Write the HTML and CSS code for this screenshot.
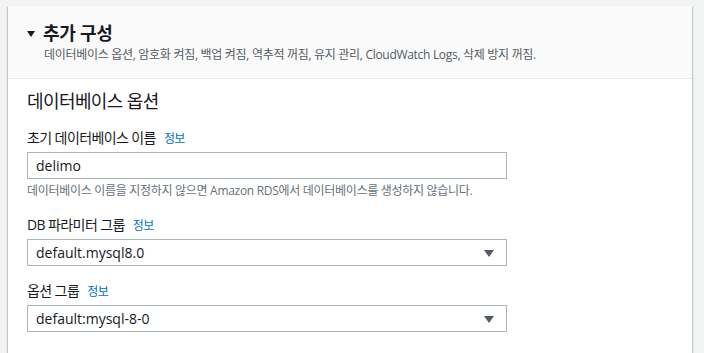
FILE: index.html
```html
<!DOCTYPE html>
<html lang="ko">
<head>
<meta charset="UTF-8">
<title>추가 구성</title>
<link rel="stylesheet" href="styles.css">
</head>
<body>
<div class="panel">
  <div class="panel-header">
    <div class="panel-title">
      <span class="caret"></span>
      <h2>추가 구성</h2>
    </div>
    <div class="panel-desc">데이터베이스 옵션, 암호화 켜짐, 백업 켜짐, 역추적 꺼짐, 유지 관리, CloudWatch Logs, 삭제 방지 꺼짐.</div>
  </div>
  <div class="panel-body">
    <h3 class="section-title">데이터베이스 옵션</h3>

    <div class="field">
      <div class="field-label">초기 데이터베이스 이름 <a class="info" href="#">정보</a></div>
      <div class="input">delimo</div>
      <div class="hint">데이터베이스 이름을 지정하지 않으면 Amazon RDS에서 데이터베이스를 생성하지 않습니다.</div>
    </div>

    <div class="field">
      <div class="field-label">DB 파라미터 그룹 <a class="info" href="#">정보</a></div>
      <div class="input select">default.mysql8.0<span class="arrow"></span></div>
    </div>

    <div class="field">
      <div class="field-label">옵션 그룹 <a class="info" href="#">정보</a></div>
      <div class="input select">default:mysql-8-0<span class="arrow"></span></div>
    </div>
  </div>
</div>
</body>
</html>
```

FILE: styles.css
```css
body {
  margin: 0;
  padding: 6px 12px 0 8px;
  background-color: #f2f3f3;
  font-family: 'Open Sans', 'Noto Sans CJK KR', sans-serif;
  color: #16191f;
  letter-spacing: -0.6px;
}

.panel {
  background-color: #ffffff;
  box-shadow: 0 1px 1px 0 rgba(0, 28, 36, 0.3), 1px 1px 1px 0 rgba(0, 28, 36, 0.15), -1px 1px 1px 0 rgba(0, 28, 36, 0.15);
  min-height: 360px;
}

.panel-header {
  background-color: #fafafa;
  border-bottom: 1px solid #eaeded;
  padding: 16px 20px 14px 19px;
}

.panel-title {
  display: flex;
  align-items: center;
  gap: 8px;
}

.caret {
  width: 0;
  height: 0;
  border-left: 4px solid transparent;
  border-right: 4px solid transparent;
  border-top: 6px solid #16191f;
  margin-top: 2px;
}

.panel-title h2 {
  margin: 0;
  font-size: 18px;
  font-weight: 700;
  line-height: 22px;
  letter-spacing: -0.3px;
}

.panel-desc {
  font-size: 12px;
  color: #545b64;
  line-height: 18px;
  margin-top: 2px;
  padding-left: 17px;
  letter-spacing: -0.3px;
}

.panel-body {
  padding: 10px 20px 0 19px;
}

.section-title {
  margin: 0 0 9px;
  font-size: 18px;
  font-weight: 400;
  line-height: 24px;
}

.field {
  margin-top: 15px;
}

.field-label {
  font-size: 14px;
  line-height: 20px;
  margin-bottom: 3px;
}

.info {
  font-size: 12px;
  color: #0073bb;
  text-decoration: none;
  margin-left: 5px;
}

.input {
  width: 480px;
  box-sizing: border-box;
  height: 27px;
  border: 1px solid #aab7b8;
  padding: 0 8px;
  font-size: 14px;
  line-height: 25px;
  letter-spacing: 0;
  position: relative;
}

.arrow {
  position: absolute;
  right: 12px;
  top: 10px;
  width: 0;
  height: 0;
  border-left: 5px solid transparent;
  border-right: 5px solid transparent;
  border-top: 7px solid #545b64;
}

.hint {
  font-size: 12px;
  color: #687078;
  line-height: 18px;
  margin-top: 3px;
  letter-spacing: -0.3px;
}
```
